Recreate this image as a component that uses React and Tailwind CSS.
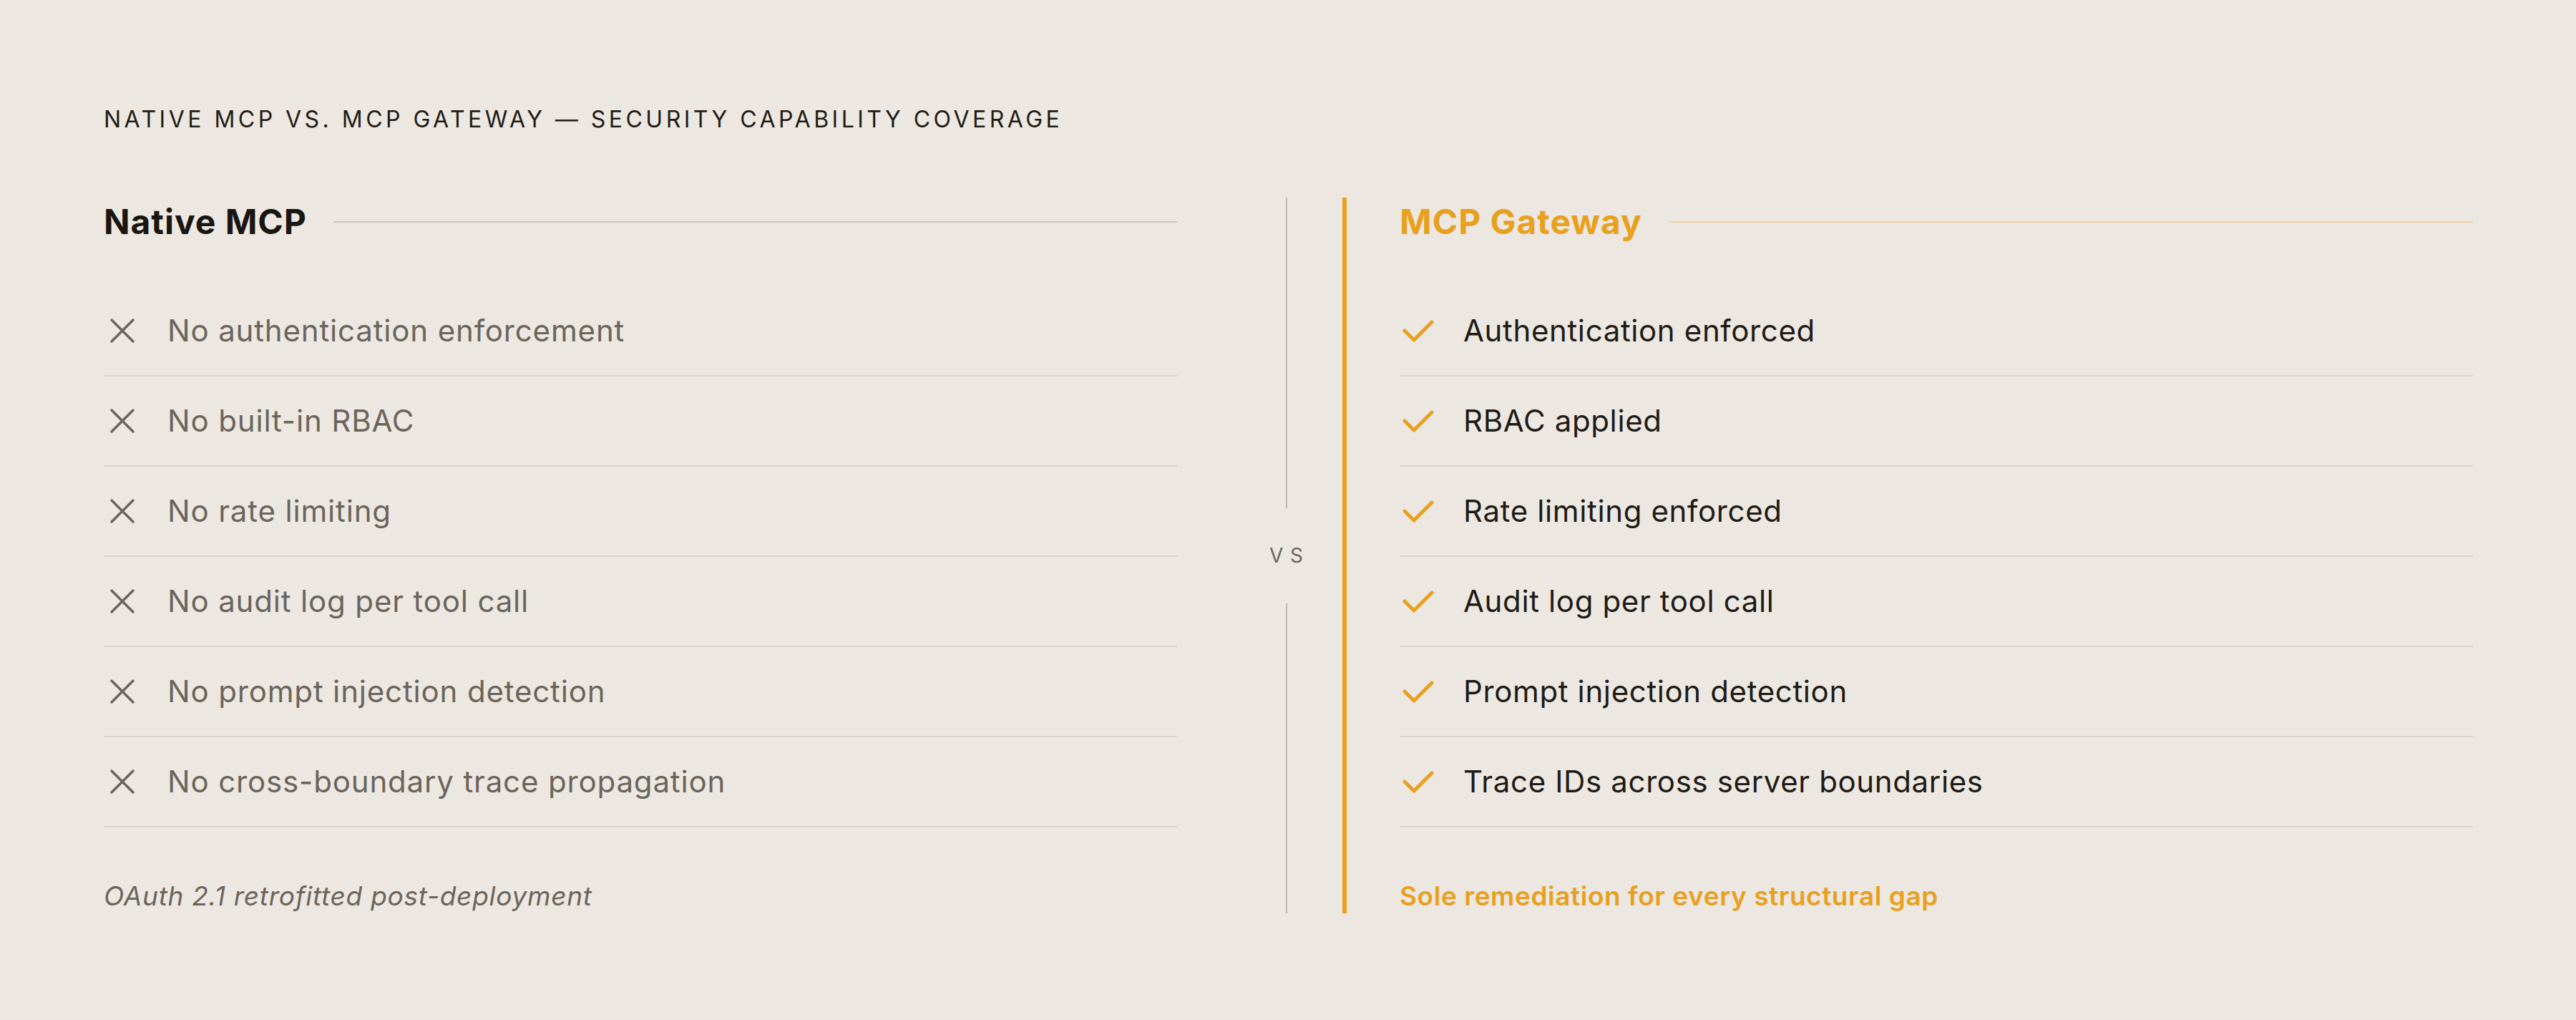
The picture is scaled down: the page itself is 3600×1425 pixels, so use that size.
const native = [
  "No authentication enforcement",
  "No built-in RBAC",
  "No rate limiting",
  "No audit log per tool call",
  "No prompt injection detection",
  "No cross-boundary trace propagation",
];

const gateway = [
  "Authentication enforced",
  "RBAC applied",
  "Rate limiting enforced",
  "Audit log per tool call",
  "Prompt injection detection",
  "Trace IDs across server boundaries",
];

const XIcon = () => (
  <svg width="36" height="36" viewBox="0 0 36 36" fill="none">
    <path d="M3 3 L33 33 M33 3 L3 33" stroke="#6b645b" strokeWidth="3.5" strokeLinecap="round" />
  </svg>
);

const CheckIcon = () => (
  <svg width="44" height="32" viewBox="0 0 44 32" fill="none">
    <path d="M3 16 L16 29 L41 4" stroke="#e8a020" strokeWidth="5" strokeLinecap="round" strokeLinejoin="round" />
  </svg>
);

const Row = ({ text, good }) => (
  <div className="flex items-center h-[126px] border-b-2 border-[#d8d3cc]">
    <div className="w-[51px] flex justify-center shrink-0">{good ? <CheckIcon /> : <XIcon />}</div>
    <span className={`ml-[38px] text-[42px] leading-none ${good ? "tracking-[0.015em] text-[#1f1b16]" : "tracking-[0.02em] text-[#6b645b]"}`}>{text}</span>
  </div>
);

export default function App() {
  return (
    <div className="min-h-[1425px] w-full bg-[#ece8e1] pl-[145px] pt-[151px]" style={{ fontFamily: "Inter, 'Noto Sans', sans-serif" }}>
      <h1 className="text-[32px] leading-[32px] tracking-[0.14em] text-[#1f1b16] uppercase">
        Native MCP vs. MCP Gateway — Security Capability Coverage
      </h1>

      <div className="flex mt-[93px]">
        {/* left column */}
        <div className="w-[1500px] flex flex-col">
          <div className="flex items-center h-[68px] mb-[56px]">
            <h2 className="text-[48px] leading-none font-bold text-[#1a1612] tracking-[0.02em]">Native MCP</h2>
            <div className="flex-1 h-[2px] bg-[#c9c4bd] ml-[37px]" />
          </div>
          {native.map((t) => (
            <Row key={t} text={t} />
          ))}
          <p className="mt-[78px] text-[37px] leading-[36px] italic tracking-[0.02em] text-[#6b645b]">OAuth 2.1 retrofitted post-deployment</p>
        </div>

        {/* vs divider */}
        <div className="w-[231px] pl-[74px] flex flex-col items-center">
          <div className="flex-1 w-[2px] bg-[#bdb8b2]" />
          <div className="h-[133px] flex items-center justify-center">
            <span className="text-[28px] leading-none tracking-[0.35em] pl-[0.35em] text-[#6b645b]">VS</span>
          </div>
          <div className="flex-1 w-[2px] bg-[#bdb8b2]" />
        </div>

        {/* right column */}
        <div className="border-l-[6px] border-[#e8a020] pl-[74px]">
          <div className="w-[1500px] flex flex-col">
            <div className="flex items-center h-[68px] mb-[56px]">
              <h2 className="text-[48px] leading-none font-bold text-[#e8a020] tracking-[0.02em]">MCP Gateway</h2>
              <div className="flex-1 h-[2px] bg-[#efd19b] ml-[37px]" />
            </div>
            {gateway.map((t) => (
              <Row key={t} text={t} good />
            ))}
            <p className="mt-[78px] mb-[6px] text-[37px] leading-[36px] font-semibold tracking-[0.015em] text-[#e8a020]">Sole remediation for every structural gap</p>
          </div>
        </div>
      </div>
    </div>
  );
}
